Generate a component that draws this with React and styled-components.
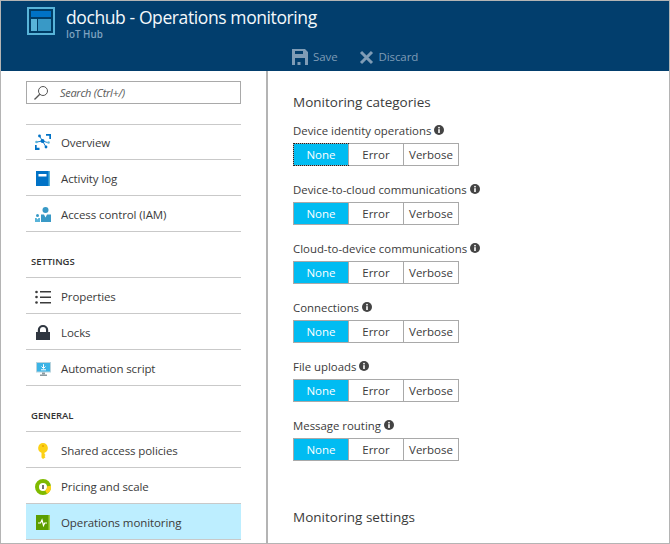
import React from 'react';
import styled, { createGlobalStyle } from 'styled-components';

const GlobalStyle = createGlobalStyle`
  html, body {
    margin: 0;
    padding: 0;
    background: #fff;
    overflow: hidden;
  }
  * {
    box-sizing: border-box;
  }
`;

const Frame = styled.div`
  width: 670px;
  height: 544px;
  display: flex;
  flex-direction: column;
  border: 1px solid #b4b4b4;
  font-family: 'Open Sans', 'Noto Sans', sans-serif;
  color: #3b3b3b;
  overflow: hidden;
`;

const Header = styled.header`
  height: 70px;
  flex: none;
  background: #023e6d;
  display: flex;
  flex-direction: column;
  padding: 6px 0 0 26px;
`;

const TitleRow = styled.div`
  display: flex;
  gap: 11px;
`;

const TitleText = styled.div`
  display: flex;
  flex-direction: column;
  margin-top: -1px;
`;

const Title = styled.h1`
  margin: 0;
  font-size: 17.5px;
  letter-spacing: -0.4px;
  line-height: 22px;
  font-weight: 400;
  color: #f4f8fb;
  white-space: nowrap;
`;

const Subtitle = styled.div`
  font-size: 9.8px;
  line-height: 14px;
  font-weight: 600;
  color: #7fa3c0;
`;

const Toolbar = styled.div`
  display: flex;
  align-items: center;
  gap: 21px;
  margin: 7px 0 0 265px;
`;

const ToolButton = styled.div`
  display: flex;
  align-items: center;
  gap: 5px;
  font-size: 11.5px;
  letter-spacing: -0.1px;
  line-height: 16px;
  color: #7f9cb6;
`;

const Body = styled.div`
  flex: 1;
  min-height: 0;
  display: flex;
`;

const Sidebar = styled.nav`
  width: 267px;
  flex: none;
  padding: 10px 25px 0;
  border-right: 2px solid #b4b4b4;
`;

const SearchBox = styled.div`
  height: 23px;
  width: 215px;
  display: flex;
  align-items: center;
  gap: 11px;
  padding-left: 6px;
  border: 1px solid #a9a9a9;
  font-size: 11px;
  letter-spacing: -0.3px;
  font-style: italic;
  color: #5a5a5a;
  margin-bottom: 20px;
`;

const NavGroup = styled.div`
  width: 215px;
  border-bottom: 1px solid #c9c9c9;
`;

const NavItem = styled.div`
  height: ${(p) => (p.$short ? '35px' : '36px')};
  padding-top: ${(p) => (p.$short ? '0' : '2px')};
  display: flex;
  align-items: center;
  border-top: 1px solid #c9c9c9;
  font-size: 11.5px;
  letter-spacing: -0.1px;
  color: #3b3b3b;
  background: ${(p) => (p.$active ? '#bdeeff' : 'transparent')};
  white-space: nowrap;
`;

const IconSlot = styled.span`
  width: 35px;
  flex: none;
  display: flex;
  justify-content: center;
  padding-left: 2px;
  padding-right: 3px;
`;

const SectionTitle = styled.div`
  height: 45px;
  padding: 22px 0 0 5px;
  font-size: 9.5px;
  line-height: 15px;
  font-weight: 600;
  color: #333;
`;

const Content = styled.main`
  flex: 1;
  padding: 21px 0 0 25px;
`;

const Heading = styled.h2`
  margin: 0;
  font-size: 13.5px;
  line-height: 20px;
  font-weight: 400;
  color: #3b3b3b;
  white-space: nowrap;
`;

const Categories = styled.div`
  display: flex;
  flex-direction: column;
  gap: 15px;
  margin: 10px 0 46px;
`;

const Label = styled.div`
  display: flex;
  align-items: center;
  gap: 3px;
  height: 16px;
  margin-bottom: 5px;
  font-size: 11.4px;
  color: #3b3b3b;
  white-space: nowrap;
`;

const Segments = styled.div`
  display: flex;
  width: 166px;
  height: 23px;
  border: 1px solid #a9a9a9;
`;

const Segment = styled.div`
  flex: ${(p) => (p.$first ? '0 0 54px' : '1')};
  display: flex;
  align-items: center;
  justify-content: center;
  font-size: 11.5px;
  color: ${(p) => (p.$selected ? '#fff' : '#3b3b3b')};
  background: ${(p) => (p.$selected ? '#00bcf2' : '#fff')};
  border-left: ${(p) => (p.$first ? '0' : '1px solid #a9a9a9')};
  outline: ${(p) => (p.$focused ? '1px dotted #222' : 'none')};
`;

const HubIcon = () => (
  <svg width="28" height="28" viewBox="0 0 28 28">
    <rect width="28" height="28" fill="#59b4d9" />
    <rect x="2" y="2" width="24" height="24" fill="#003c66" />
    <rect x="4" y="4" width="20" height="6" fill="#0072c6" />
    <rect x="4" y="12" width="6" height="12" fill="#59b4d9" />
    <rect x="11" y="12" width="13" height="12" fill="#3999c6" />
  </svg>
);

const SaveIcon = () => (
  <svg width="16" height="16" viewBox="0 0 16 16">
    <path
      fill="#7f9cb6"
      fillRule="evenodd"
      d="M0 0h13l3 3v13H0zM3 2v3h8V2zM3 9v7h2.500v-3h3v3H13V9z"
    />
  </svg>
);

const DiscardIcon = () => (
  <svg width="15" height="15" viewBox="0 0 15 15">
    <path d="M2 2l11 11M13 2L2 13" stroke="#7f9cb6" strokeWidth="3" />
  </svg>
);

const SearchIcon = () => (
  <svg width="16" height="16" viewBox="0 0 16 16" fill="none" stroke="#555">
    <circle cx="10" cy="6" r="4.500" />
    <path d="M6.800 9.200L1.500 14.500" strokeWidth="1.300" />
  </svg>
);

const OverviewIcon = () => (
  <svg width="16" height="16" viewBox="0 0 16 16">
    <path fill="#0072c6" d="M0 11h1.700v2.800h2.800V16H0zM11 0h5v5h-1.700V1.800H11z" />
    <path d="M2 8l5.500-1M7.500 7L4.500 2M7.500 7l5 1.500M7.500 7l3.500 6" stroke="#0072c6" strokeWidth="0.900" fill="none" />
    <circle cx="7.500" cy="7" r="2" fill="#0072c6" />
    <circle cx="1.500" cy="8" r="1.300" fill="#59b4d9" />
    <circle cx="4.500" cy="2" r="1.400" fill="#0072c6" />
    <circle cx="13.500" cy="8.500" r="1.300" fill="#59b4d9" />
    <circle cx="11" cy="13" r="1.400" fill="#0072c6" />
  </svg>
);

const ActivityIcon = () => (
  <svg width="14" height="15" viewBox="0 0 14 15">
    <rect width="14" height="15" fill="#59b4d9" />
    <rect width="12.500" height="15" fill="#0072c6" />
    <rect x="2.500" y="3" width="8" height="2.500" fill="#fff" />
  </svg>
);

const AccessIcon = () => (
  <svg width="16" height="15" viewBox="0 0 16 15">
    <circle cx="10.500" cy="3" r="3" fill="#3999c6" />
    <path fill="#3999c6" d="M6 7.500h3l1.500 3 1.500-3h4V15H6z" />
    <circle cx="2.500" cy="8.500" r="1.500" fill="#3999c6" />
    <path fill="#59b4d9" d="M0 11h1.500l1 1.500 1-1.500H5v4H0z" />
  </svg>
);

const PropertiesIcon = () => (
  <svg width="16" height="14" viewBox="0 0 16 14">
    <g fill="#3b3b3b">
      <circle cx="1.500" cy="2" r="1.300" />
      <circle cx="1.500" cy="7" r="1.300" />
      <circle cx="1.500" cy="12.500" r="1.300" />
      <rect x="5" y="1" width="11" height="1.500" />
      <rect x="5" y="6.500" width="11" height="1.500" />
      <rect x="5" y="12" width="11" height="1.500" />
    </g>
  </svg>
);

const LockIcon = () => (
  <svg width="14" height="15" viewBox="0 0 14 15">
    <path
      fill="#2f3640"
      fillRule="evenodd"
      d="M0 7h1.800V5a5.200 5 0 0 1 10.400 0v2H14v8H0zM4 7h6V5a3 3 0 0 0-6 0z"
    />
  </svg>
);

const ScriptIcon = () => (
  <svg width="15" height="14" viewBox="0 0 15 14">
    <rect width="15" height="10.500" fill="#b8d4de" />
    <rect x="1" y="1" width="13" height="8.500" fill="#3cb4e6" />
    <path d="M7.500 2.200v4M5.500 4.500l2 2 2-2M5 7.800h5" stroke="#fff" fill="none" />
    <rect x="6" y="10.500" width="3" height="2" fill="#8c9aa0" />
    <rect x="4" y="12.500" width="7" height="1.500" fill="#8c9aa0" />
  </svg>
);

const KeyIcon = () => (
  <svg width="10" height="16" viewBox="0 0 10 16">
    <path
      fill="#fcd116"
      d="M5 0a5 5 0 0 1 1.500 9.700V11l1 1-1 1 1 1.200L5 16l-1.500-1.500V9.700A5 5 0 0 1 5 0z"
    />
    <circle cx="5" cy="3" r="1.100" fill="#e8a800" />
  </svg>
);

const PricingIcon = () => (
  <svg width="16" height="16" viewBox="0 0 16 16">
    <circle cx="8" cy="8" r="6" fill="#fff" stroke="#7fba00" strokeWidth="4" />
    <path d="M14 7a6 6 0 0 1-3 6" stroke="#fcd116" strokeWidth="4" fill="none" />
    <circle cx="8" cy="8" r="2.500" fill="#fff" />
    <path d="M8 6v4" stroke="#444" strokeWidth="1.500" />
  </svg>
);

const MonitorIcon = () => (
  <svg width="14" height="15" viewBox="0 0 14 15">
    <rect width="14" height="15" fill="#a0d14a" />
    <rect width="12.500" height="15" fill="#5c9e00" />
    <path d="M2 8h2.500l1.500-3 1.500 5.500 1.200-2.500H11" stroke="#fff" strokeWidth="1.200" fill="none" />
  </svg>
);

const InfoIcon = () => (
  <svg width="10" height="10" viewBox="0 0 10 10">
    <circle cx="5" cy="5" r="5" fill="#444" />
    <rect x="4.200" y="4.200" width="1.600" height="3.800" fill="#fff" />
    <rect x="4.200" y="1.900" width="1.600" height="1.500" fill="#fff" />
  </svg>
);

const NavList = ({ items }) => (
  <NavGroup>
    {items.map(({ label, icon: Icon, active, short }) => (
      <NavItem key={label} $active={active} $short={short}>
        <IconSlot>
          <Icon />
        </IconSlot>
        {label}
      </NavItem>
    ))}
  </NavGroup>
);

const categories = [
  'Device identity operations',
  'Device-to-cloud communications',
  'Cloud-to-device communications',
  'Connections',
  'File uploads',
  'Message routing',
];

const App = () => (
  <>
    <GlobalStyle />
    <Frame>
      <Header>
        <TitleRow>
          <HubIcon />
          <TitleText>
            <Title>dochub - Operations monitoring</Title>
            <Subtitle>IoT Hub</Subtitle>
          </TitleText>
        </TitleRow>
        <Toolbar>
          <ToolButton>
            <SaveIcon />
            Save
          </ToolButton>
          <ToolButton>
            <DiscardIcon />
            Discard
          </ToolButton>
        </Toolbar>
      </Header>
      <Body>
        <Sidebar>
          <SearchBox>
            <SearchIcon />
            Search (Ctrl+/)
          </SearchBox>
          <NavList
            items={[
              { label: 'Overview', icon: OverviewIcon, short: true },
              { label: 'Activity log', icon: ActivityIcon },
              { label: 'Access control (IAM)', icon: AccessIcon },
            ]}
          />
          <SectionTitle>SETTINGS</SectionTitle>
          <NavList
            items={[
              { label: 'Properties', icon: PropertiesIcon },
              { label: 'Locks', icon: LockIcon },
              { label: 'Automation script', icon: ScriptIcon },
            ]}
          />
          <SectionTitle>GENERAL</SectionTitle>
          <NavList
            items={[
              { label: 'Shared access policies', icon: KeyIcon },
              { label: 'Pricing and scale', icon: PricingIcon },
              { label: 'Operations monitoring', icon: MonitorIcon, active: true },
            ]}
          />
        </Sidebar>
        <Content>
          <Heading>Monitoring categories</Heading>
          <Categories>
            {categories.map((name, i) => (
              <div key={name}>
                <Label>
                  {name}
                  <InfoIcon />
                </Label>
                <Segments>
                  <Segment $first $selected $focused={i === 0}>None</Segment>
                  <Segment>Error</Segment>
                  <Segment>Verbose</Segment>
                </Segments>
              </div>
            ))}
          </Categories>
          <Heading>Monitoring settings</Heading>
        </Content>
      </Body>
    </Frame>
  </>
);

export default App;
